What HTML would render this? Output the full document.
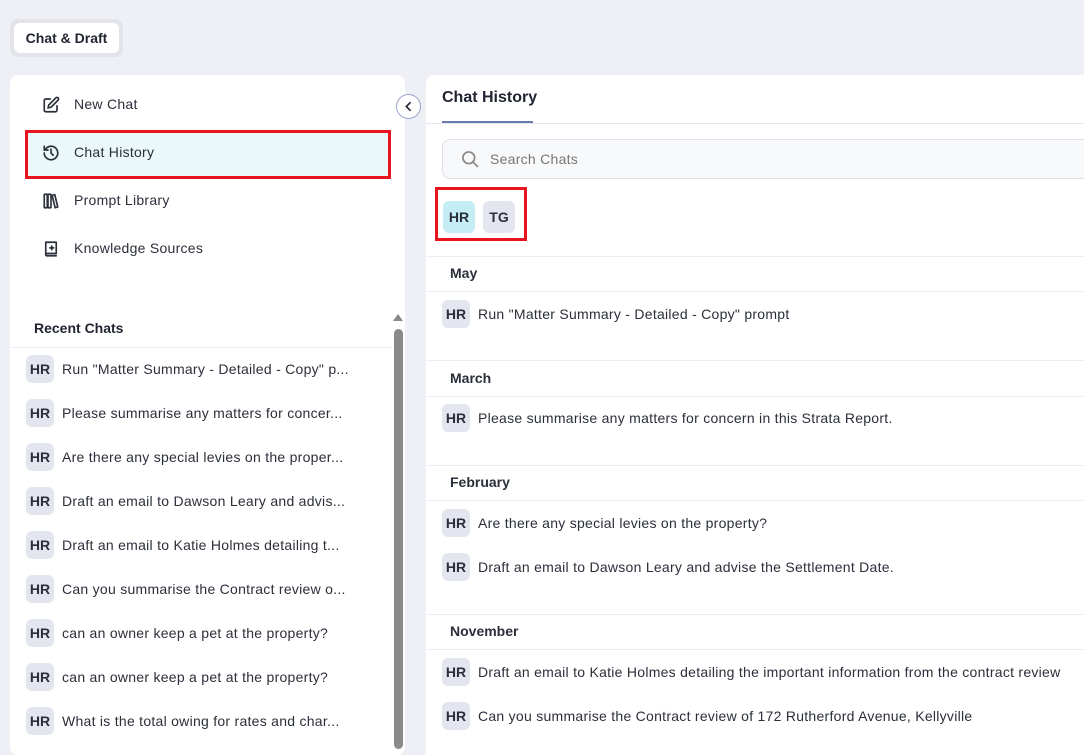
<!DOCTYPE html>
<html><head><meta charset="utf-8"><style>
*{box-sizing:border-box;margin:0;padding:0}
body{width:1084px;height:742px;overflow:hidden;background:#eef0f5;font-family:"Liberation Sans",sans-serif;color:#1f2430;position:relative}
.abs{position:absolute}
.tabo{left:10px;top:19px;width:113px;height:38px;background:#e2e4ea;border-radius:8px}
.tabi{left:14px;top:23px;width:105px;height:30px;background:#fff;border-radius:6px;font-size:14px;font-weight:bold;line-height:30px;text-align:center;color:#1f2430}
.lp{left:10px;top:75px;width:395px;height:680px;background:#fff;border-radius:8px}
.rp{left:426px;top:75px;width:670px;height:680px;background:#fff;border-radius:8px 0 0 0}
.nav{left:74px;font-size:14px;color:#2b2f3a;letter-spacing:0.27px}
.ic{left:42px;width:18px;height:18px}
.av{width:28px;height:28px;border-radius:6px;background:#e3e6ee;font-size:14px;font-weight:bold;line-height:28px;text-align:center;color:#2b2f3a}
.rt{font-size:14px;color:#2b2f3a;white-space:nowrap;letter-spacing:0.27px}
.hl{height:1px;background:#eceef2}
.sec{left:450px;font-size:14px;font-weight:bold;color:#2b2f3a}
</style></head><body>
<div class="abs tabo"></div><div class="abs tabi">Chat &amp; Draft</div>
<div class="abs lp"></div><div class="abs rp"></div>

<svg class="abs ic" style="top:96px" viewBox="0 0 24 24" fill="none" stroke="#2b2f3a" stroke-width="2.2" stroke-linecap="round" stroke-linejoin="round"><path d="M11 4H5a2 2 0 0 0-2 2v13a2 2 0 0 0 2 2h13a2 2 0 0 0 2-2v-6"/><path d="M18.5 2.5a2.1 2.1 0 0 1 3 3L12 15l-4 1 1-4z"/></svg>
<div class="abs nav" style="top:96px">New Chat</div>

<div class="abs" style="left:25px;top:130px;width:366px;height:49px;border:3px solid #e8141e;background:#eaf8fa"></div>
<svg class="abs ic" style="top:144px" viewBox="0 0 24 24" fill="none" stroke="#2b2f3a" stroke-width="2.2" stroke-linecap="round" stroke-linejoin="round"><path d="M3 12a9 9 0 1 0 3-6.7L3 8"/><path d="M3 3v5h5"/><path d="M12 7v5l3 3"/></svg>
<div class="abs nav" style="top:144px">Chat History</div>

<svg class="abs ic" style="top:192px" viewBox="0 0 24 24" fill="none" stroke="#2b2f3a" stroke-width="2.2" stroke-linejoin="round"><rect x="3" y="3" width="4" height="18" rx="1"/><rect x="8" y="3" width="4" height="18" rx="1"/><path d="M13.5 4.5l3.5-1 4 16.5-3.5 1z"/></svg>
<div class="abs nav" style="top:192px">Prompt Library</div>

<svg class="abs ic" style="top:240px" viewBox="0 0 24 24" fill="none" stroke="#2b2f3a" stroke-width="2.2" stroke-linecap="round" stroke-linejoin="round"><path d="M5 3h14v15H6.5A1.5 1.5 0 0 0 5 19.5V3z"/><path d="M5 19.5A1.5 1.5 0 0 0 6.5 21H19"/><path d="M13 8v5M10.5 10.5h5"/></svg>
<div class="abs nav" style="top:240px">Knowledge Sources</div>

<div class="abs" style="left:396px;top:94px;width:25px;height:25px;border-radius:50%;border:1px solid #9aa3c9;background:#fff"></div>
<svg class="abs" style="left:402px;top:100px;width:13px;height:13px" viewBox="0 0 24 24" fill="none" stroke="#1f2430" stroke-width="3" stroke-linecap="round"><path d="M15 5l-7 7 7 7"/></svg>

<div class="abs" style="left:34px;top:320px;font-size:14px;font-weight:bold">Recent Chats</div>
<div class="abs hl" style="left:10px;top:347px;width:382px"></div>
<svg class="abs" style="left:393px;top:313px;width:10px;height:8px" viewBox="0 0 10 8"><path d="M0 8L5 1l5 7z" fill="#888"/></svg>
<div class="abs" style="left:394px;top:329px;width:9px;height:420px;background:#8a8a8a;border-radius:5px"></div>

<div class="abs av" style="left:26px;top:355px">HR</div><div class="abs rt" style="left:62px;top:361px">Run "Matter Summary - Detailed - Copy" p...</div>
<div class="abs av" style="left:26px;top:399px">HR</div><div class="abs rt" style="left:62px;top:405px">Please summarise any matters for concer...</div>
<div class="abs av" style="left:26px;top:443px">HR</div><div class="abs rt" style="left:62px;top:449px">Are there any special levies on the proper...</div>
<div class="abs av" style="left:26px;top:487px">HR</div><div class="abs rt" style="left:62px;top:493px">Draft an email to Dawson Leary and advis...</div>
<div class="abs av" style="left:26px;top:531px">HR</div><div class="abs rt" style="left:62px;top:537px">Draft an email to Katie Holmes detailing t...</div>
<div class="abs av" style="left:26px;top:575px">HR</div><div class="abs rt" style="left:62px;top:581px">Can you summarise the Contract review o...</div>
<div class="abs av" style="left:26px;top:619px">HR</div><div class="abs rt" style="left:62px;top:625px">can an owner keep a pet at the property?</div>
<div class="abs av" style="left:26px;top:663px">HR</div><div class="abs rt" style="left:62px;top:669px">can an owner keep a pet at the property?</div>
<div class="abs av" style="left:26px;top:707px">HR</div><div class="abs rt" style="left:62px;top:713px">What is the total owing for rates and char...</div>

<div class="abs" style="left:442px;top:89px;font-size:16px;font-weight:bold">Chat History</div>
<div class="abs hl" style="left:426px;top:123px;width:660px;background:#e3e6ec"></div>
<div class="abs" style="left:442px;top:121px;width:91px;height:2px;background:#6a7bb0"></div>

<div class="abs" style="left:442px;top:139px;width:660px;height:40px;border:1px solid #dde0e8;border-radius:8px;background:#f8f9fb"></div>
<svg class="abs" style="left:460px;top:149px;width:20px;height:20px" viewBox="0 0 24 24" fill="none" stroke="#888" stroke-width="2" stroke-linecap="round"><circle cx="10.5" cy="10.5" r="7"/><path d="M16 16l5 5"/></svg>
<div class="abs" style="left:490px;top:151px;font-size:14px;color:#777;letter-spacing:0.27px">Search Chats</div>

<div class="abs" style="left:435px;top:187px;width:92px;height:54px;border:3px solid #e8141e"></div>
<div class="abs av" style="left:443px;top:201px;width:32px;height:32px;line-height:32px;background:#c5edf5">HR</div>
<div class="abs av" style="left:483px;top:201px;width:32px;height:32px;line-height:32px">TG</div>

<div class="abs hl" style="left:426px;top:256px;width:660px"></div>
<div class="abs sec" style="top:265px">May</div>
<div class="abs hl" style="left:426px;top:291px;width:660px"></div>
<div class="abs av" style="left:442px;top:300px">HR</div><div class="abs rt" style="left:478px;top:306px">Run "Matter Summary - Detailed - Copy" prompt</div>

<div class="abs hl" style="left:426px;top:360px;width:660px"></div>
<div class="abs sec" style="top:370px">March</div>
<div class="abs hl" style="left:426px;top:396px;width:660px"></div>
<div class="abs av" style="left:442px;top:404px">HR</div><div class="abs rt" style="left:478px;top:410px">Please summarise any matters for concern in this Strata Report.</div>

<div class="abs hl" style="left:426px;top:465px;width:660px"></div>
<div class="abs sec" style="top:474px">February</div>
<div class="abs hl" style="left:426px;top:500px;width:660px"></div>
<div class="abs av" style="left:442px;top:509px">HR</div><div class="abs rt" style="left:478px;top:515px">Are there any special levies on the property?</div>
<div class="abs av" style="left:442px;top:553px">HR</div><div class="abs rt" style="left:478px;top:559px">Draft an email to Dawson Leary and advise the Settlement Date.</div>

<div class="abs hl" style="left:426px;top:614px;width:660px"></div>
<div class="abs sec" style="top:623px">November</div>
<div class="abs hl" style="left:426px;top:649px;width:660px"></div>
<div class="abs av" style="left:442px;top:658px">HR</div><div class="abs rt" style="left:478px;top:664px">Draft an email to Katie Holmes detailing the important information from the contract review</div>
<div class="abs av" style="left:442px;top:702px">HR</div><div class="abs rt" style="left:478px;top:708px">Can you summarise the Contract review of 172 Rutherford Avenue, Kellyville</div>
</body></html>
